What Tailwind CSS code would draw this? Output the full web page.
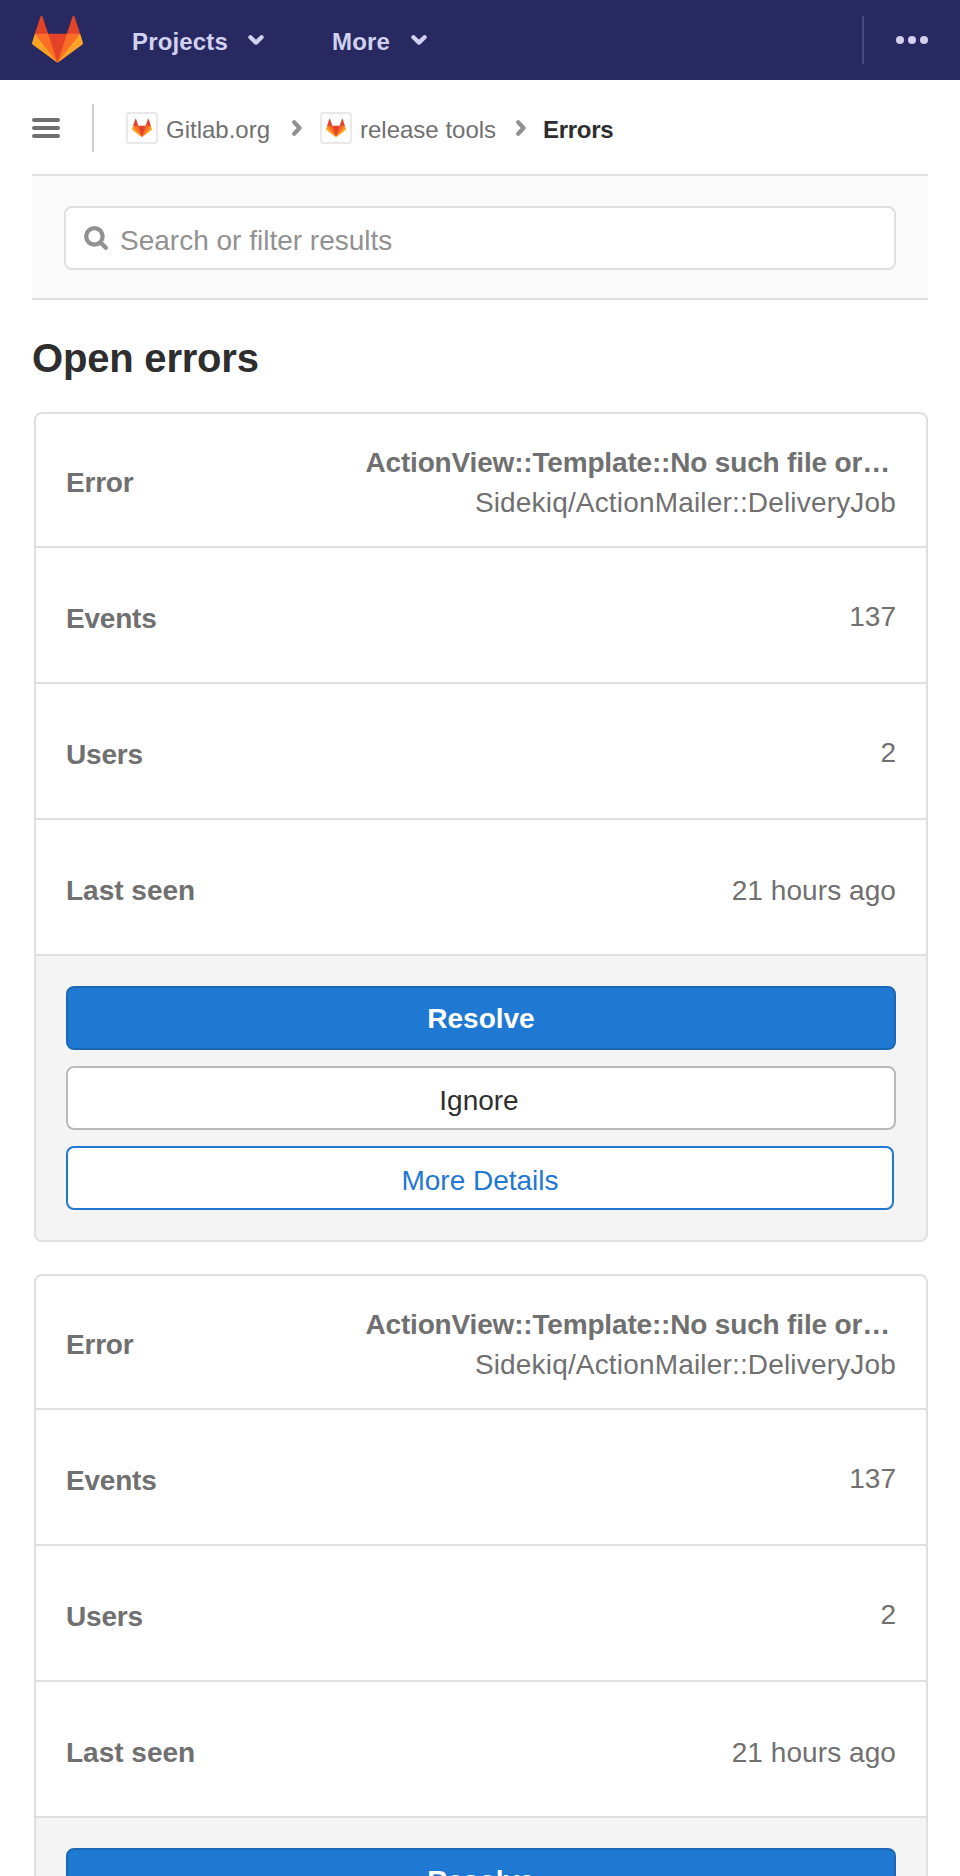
<!DOCTYPE html>
<html lang="en">
<head>
<meta charset="utf-8">
<title>Errors · release tools</title>
<script src="https://cdn.jsdelivr.net/npm/@tailwindcss/browser@4"></script>
</head>
<body class="h-[1876px] overflow-hidden bg-white font-['Liberation_Sans',Arial,sans-serif] text-[28px] leading-10 text-[#707070]">
<svg class="hidden">
  <symbol id="tanuki" viewBox="0 0 36 36">
    <path fill="#e24329" d="M2 14l9.38 9v-9l-4-12.28c-.205-.632-1.176-.632-1.38 0z"/>
    <path fill="#e24329" d="M34 14l-9.38 9v-9l4-12.28c.205-.632 1.176-.632 1.38 0z"/>
    <path fill="#e24329" d="M18 34.38L3 14h30z"/>
    <path fill="#fc6d26" d="M18 34.38L11.38 14H2l4 11z"/>
    <path fill="#fc6d26" d="M18 34.38L24.62 14H34l-4 11z"/>
    <path fill="#fca326" d="M2 14L.1 20.16c-.18.565 0 1.2.5 1.56l17.42 12.66z"/>
    <path fill="#fca326" d="M34 14l1.9 6.16c.18.565 0 1.2-.5 1.56L18 34.38z"/>
  </symbol>
  <symbol id="down" viewBox="0 0 16 10">
    <path d="M2.4 2.3L8 7.6l5.6-5.3" fill="none" stroke="currentColor" stroke-width="4.2" stroke-linecap="round" stroke-linejoin="round"/>
  </symbol>
  <symbol id="right" viewBox="0 0 10 16">
    <path d="M2.2 2.3L7.6 8l-5.4 5.7" fill="none" stroke="currentColor" stroke-width="4.2" stroke-linecap="round" stroke-linejoin="round"/>
  </symbol>
</svg>

<header class="flex h-20 items-center bg-[#292961] px-8 text-2xl font-bold text-[#d1d1f0]">
  <svg class="mb-px size-[51px]"><use href="#tanuki"/></svg>
  <a class="ml-[49px] flex w-[200px] items-center pt-1 tracking-[0.15px]">Projects<svg class="mb-1 ml-5 h-2.5 w-4"><use href="#down"/></svg></a>
  <a class="flex items-center pt-1 tracking-[0.15px]">More<svg class="mb-1 ml-[21px] h-2.5 w-4"><use href="#down"/></svg></a>
  <div class="ml-auto h-12 w-0.5 bg-[#494982]"></div>
  <div class="ml-8 flex gap-1">
    <i class="size-2 rounded-full bg-current"></i><i class="size-2 rounded-full bg-current"></i><i class="size-2 rounded-full bg-current"></i>
  </div>
</header>

<main class="px-8">
  <nav class="flex h-24 items-center text-2xl">
    <div class="flex w-7 flex-col gap-1">
      <i class="h-1 rounded-full bg-[#707070]"></i><i class="h-1 rounded-full bg-[#707070]"></i><i class="h-1 rounded-full bg-[#707070]"></i>
    </div>
    <div class="ml-8 h-12 w-0.5 bg-[#cfcfcf]"></div>
    <span class="ml-8 flex size-8 items-center justify-center rounded border-2 border-[#e9e9e9]"><svg class="size-5"><use href="#tanuki"/></svg></span>
    <span class="ml-2 w-[126px] pt-[3px]">Gitlab.org</span>
    <svg class="h-4 w-2.5 text-[#919191]"><use href="#right"/></svg>
    <span class="ml-[18px] flex size-8 items-center justify-center rounded border-2 border-[#e9e9e9]"><svg class="size-5"><use href="#tanuki"/></svg></span>
    <span class="ml-2 w-[156px] pt-[3px]">release tools</span>
    <svg class="h-4 w-2.5 text-[#919191]"><use href="#right"/></svg>
    <span class="ml-[17px] pt-[3px] font-bold tracking-[-0.3px] text-[#2e2e2e]">Errors</span>
  </nav>

  <section class="-mt-0.5 border-y-2 border-[#dfdfdf] bg-[#fafafa] px-8 pt-[30px] pb-7">
    <div class="flex h-16 items-center rounded-lg border-2 border-[#dfdfdf] bg-white pl-[18px] text-[#919191]">
      <svg class="size-6" viewBox="0 0 24 24" fill="none" stroke="currentColor" stroke-width="4.3" stroke-linecap="round"><circle cx="10.4" cy="10.4" r="8.2"/><path d="M16.5 16.5L21.8 21.8"/></svg>
      <span class="ml-3 pt-1.5">Search or filter results</span>
    </div>
  </section>

  <h1 class="mt-[34px] mb-[30px] text-[40px] leading-[48px] font-bold tracking-[-0.2px] text-[#2e2e2e]">Open errors</h1>

  <article class="ml-0.5 rounded-lg border-2 border-[#dfdfdf]">
    <div class="flex h-[134px] items-center justify-between border-b-2 border-[#dfdfdf] px-[30px] pt-1.5">
      <b class="tracking-[-0.2px]">Error</b>
      <div class="text-right">
        <div class="pr-1.5 font-bold tracking-[-0.17px]">ActionView::Template::No such file or…</div>
        <div class="tracking-[0.17px]">Sidekiq/ActionMailer::DeliveryJob</div>
      </div>
    </div>
    <div class="flex h-[136px] items-center justify-between border-b-2 border-[#dfdfdf] px-[30px]"><b class="pt-2 tracking-[-0.2px]">Events</b><span class="pt-1">137</span></div>
    <div class="flex h-[136px] items-center justify-between border-b-2 border-[#dfdfdf] px-[30px]"><b class="pt-2 tracking-[-0.2px]">Users</b><span class="pt-1">2</span></div>
    <div class="flex h-[136px] items-center justify-between border-b-2 border-[#dfdfdf] px-[30px]"><b class="pt-2">Last seen</b><span class="pt-2 tracking-[0.07px]">21 hours ago</span></div>
    <div class="flex flex-col gap-4 rounded-b-md bg-[#f4f4f4] p-[30px]">
      <button class="h-16 rounded-lg border-2 border-[#1b69b6] bg-[#1f78d1] pt-0.5 font-bold text-white">Resolve</button>
      <button class="h-16 rounded-lg border-2 border-[#b9b9b9] bg-white pt-1.5 pr-1 text-[#2e2e2e]">Ignore</button>
      <button class="mr-0.5 h-16 rounded-lg border-2 border-[#1f78d1] bg-white pt-1.5 text-[#1f78d1]">More Details</button>
    </div>
  </article>

  <article class="mt-8 ml-0.5 rounded-lg border-2 border-[#dfdfdf]">
    <div class="flex h-[134px] items-center justify-between border-b-2 border-[#dfdfdf] px-[30px] pt-1.5">
      <b class="tracking-[-0.2px]">Error</b>
      <div class="text-right">
        <div class="pr-1.5 font-bold tracking-[-0.17px]">ActionView::Template::No such file or…</div>
        <div class="tracking-[0.17px]">Sidekiq/ActionMailer::DeliveryJob</div>
      </div>
    </div>
    <div class="flex h-[136px] items-center justify-between border-b-2 border-[#dfdfdf] px-[30px]"><b class="pt-2 tracking-[-0.2px]">Events</b><span class="pt-1">137</span></div>
    <div class="flex h-[136px] items-center justify-between border-b-2 border-[#dfdfdf] px-[30px]"><b class="pt-2 tracking-[-0.2px]">Users</b><span class="pt-1">2</span></div>
    <div class="flex h-[136px] items-center justify-between border-b-2 border-[#dfdfdf] px-[30px]"><b class="pt-2">Last seen</b><span class="pt-2 tracking-[0.07px]">21 hours ago</span></div>
    <div class="flex flex-col gap-4 rounded-b-md bg-[#f4f4f4] p-[30px]">
      <button class="h-16 rounded-lg border-2 border-[#1b69b6] bg-[#1f78d1] pt-0.5 font-bold text-white">Resolve</button>
    </div>
  </article>
</main>
</body>
</html>
